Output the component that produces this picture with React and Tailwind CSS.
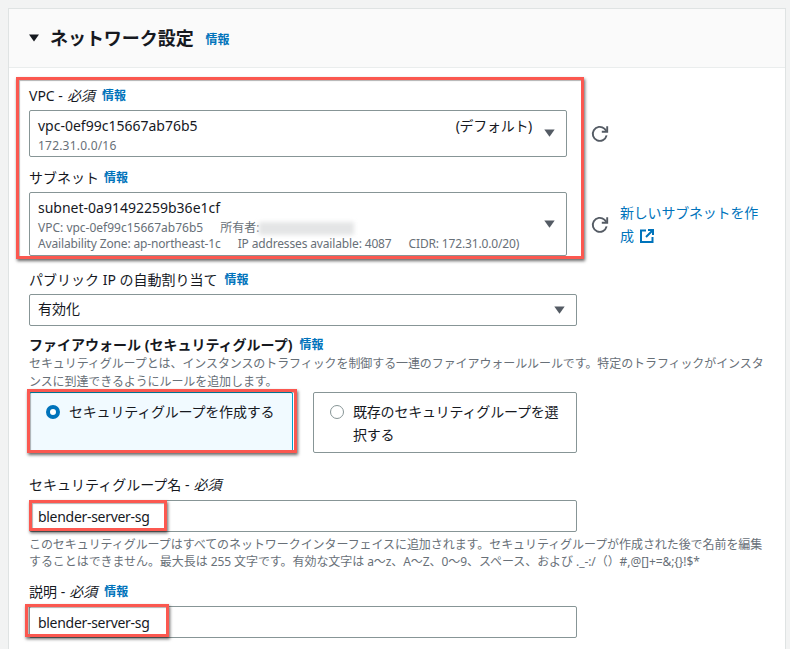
const FONT = "font-['Noto_Sans','Noto_Sans_CJK_JP',sans-serif]";
const HELP_1 = "このセキュリティグループはすべてのネットワークインターフェイスに追加されます。セキュリティグループが作成された後で名前を編集";
const HELP_2 = "することはできません。最大長は 255 文字です。有効な文字は a〜z、A〜Z、0〜9、スペース、および ._-:/（）#,@[]+=&;{}!$*";

function Info({ className = "" }) {
  return <a className={`text-[12px] font-bold text-[#0073bb] ${className}`}>情報</a>;
}

function Caret({ className = "" }) {
  return (
    <svg width="11" height="8" viewBox="0 0 11 8" className={`shrink-0 ${className}`}>
      <path d="M0.3 0.5 H10.7 L5.5 7.8 Z" fill="#545b64" />
    </svg>
  );
}

function Refresh({ className = "" }) {
  return (
    <svg width="18" height="18" viewBox="0 0 18 18" fill="none" className={`shrink-0 ${className}`}>
      <path d="M15.6 10.4 A7 7 0 1 1 13.4 3.6 L15.4 5.8" stroke="#545b64" strokeWidth="1.9" />
      <path d="M16.2 1.2 V6.8 H10.8" stroke="#545b64" strokeWidth="1.9" />
    </svg>
  );
}

function Highlight({ className }) {
  return (
    <div
      className={`absolute pointer-events-none border-[3px] border-[#fb5850] shadow-[1px_2px_3px_rgba(0,0,0,0.6),inset_1px_1px_1px_rgba(0,0,0,0.3)] ${className}`}
    />
  );
}

function TextField({ children }) {
  return (
    <div className="h-[32px] w-[548px] border border-[#879596] rounded-[2px] bg-white flex items-center pl-2 text-[14px] tracking-[-0.3px] text-[#16191f]">
      {children}
    </div>
  );
}

export default function App() {
  return (
    <div className={`w-[790px] h-[649px] overflow-hidden bg-[#f2f3f3] pt-2 pl-2 ${FONT}`}>
      <div className="w-[778px] h-[700px] bg-white border-l border-r border-t border-[#dfe3e3]">
        <div className="h-[59px] bg-[#fafafa] border-b border-[#eaeded] flex items-center pl-[20px]">
          <svg width="10" height="8" viewBox="0 0 10 8" className="mr-[11px]">
            <path d="M0 0.5 H10 L5 7.5 Z" fill="#16191f" />
          </svg>
          <h2 className="text-[18px] font-bold tracking-[-0.05px] text-[#16191f] leading-none">ネットワーク設定</h2>
          <Info className="ml-[12px] mt-[3px]" />
        </div>

        <div className="pl-[20px]">
          <section className="relative w-[538px] h-[188px] pt-[18px]">
            <Highlight className="left-[-13px] top-[9px] w-[568px] h-[182px]" />
            <div className="text-[14px] leading-[18px] text-[#16191f] flex items-center h-[18px] pt-[2px]">
              VPC -<em className="ml-1 italic">必須</em>
              <Info className="ml-[7px]" />
            </div>
            <div className="relative mt-[6px] w-[538px] h-[47px] border border-[#879596] rounded-[2px] flex pl-2 pt-[6px] pr-[11px]">
              <div className="flex-1">
                <div className="text-[14px] leading-[18px] text-[#16191f]">vpc-0ef99c15667ab76b5</div>
                <div className="text-[12px] tracking-[0.2px] leading-[18px] text-[#687078] mt-[2px]">172.31.0.0/16</div>
              </div>
              <span className="text-[14px] tracking-[-0.3px] leading-[18px] text-[#16191f] mr-[12px]">(デフォルト)</span>
              <Caret className="mt-[12px]" />
              <Refresh className="absolute right-[-43px] top-[14px]" />
            </div>
            <div className="text-[14px] leading-[18px] text-[#16191f] flex items-center h-[18px] mt-[11px] pt-[2px]">
              サブネット
              <Info className="ml-[5px]" />
            </div>
            <div className="relative mt-[6px] w-[538px] h-[64px] border border-[#879596] rounded-[2px] flex pl-2 pt-[6px] pr-[11px]">
              <div className="flex-1 relative">
                <div className="text-[14px] leading-[18px] text-[#16191f]">subnet-0a91492259b36e1cf</div>
                <div className="text-[12px] leading-[16px] text-[#687078] mt-[3px] flex items-center whitespace-nowrap">
                  <span>VPC: vpc-0ef99c15667ab76b5</span>
                  <span className="ml-[17px]">所有者:</span>
                  <span className="w-[95px] h-[13px] bg-[#e4e5e6] blur-[2px]" />
                </div>
                <div className="text-[12px] tracking-[-0.15px] leading-[16px] text-[#687078] flex whitespace-nowrap">
                  <span>Availability Zone: ap-northeast-1c</span>
                  <span className="ml-[17px]">IP addresses available: 4087</span>
                  <span className="ml-[17px]">CIDR: 172.31.0.0/20)</span>
                </div>
              </div>
              <Caret className="mt-[21px]" />
              <Refresh className="absolute right-[-43px] top-[23px]" />
              <div className="absolute left-[590px] top-[8px] w-[150px] text-[14px] tracking-[-0.2px] leading-[23px] text-[#0073bb]">
                新しいサブネットを作成
                <svg width="14" height="14" viewBox="0 0 14 14" fill="none" className="inline-block ml-[6px] mb-[2px]">
                  <path d="M6 1.5 H1 V13 H12.5 V8" stroke="#0073bb" strokeWidth="2" />
                  <path d="M8 1 H13 V6 M13 1 L6 8" stroke="#0073bb" strokeWidth="2" />
                </svg>
              </div>
            </div>
          </section>

          <div className="text-[14px] leading-[18px] text-[#16191f] flex items-center h-[18px] mt-[14px] pt-[2px]">
            パブリック IP の自動割り当て
            <Info className="ml-[7px]" />
          </div>
          <div className="mt-[6px] h-[32px] w-[548px] border border-[#879596] rounded-[2px] flex items-center justify-between pl-2 pr-[11px] text-[14px] leading-[18px] text-[#16191f]">
            <span className="mb-[3px]">有効化</span>
            <Caret />
          </div>

          <div className="text-[14px] leading-[18px] font-bold text-[#16191f] flex items-center h-[18px] mt-[9px] pt-[2px]">
            ファイアウォール (セキュリティグループ)
            <Info className="ml-[7px]" />
          </div>
          <p className="mt-[2px] w-[745px] text-[12px] tracking-[-0.09px] leading-[18px] text-[#687078]">
            セキュリティグループとは、インスタンスのトラフィックを制御する一連のファイアウォールルールです。特定のトラフィックがインスタ
            <br />
            ンスに到達できるようにルールを追加します。
          </p>

          <div className="relative mt-[1px] flex gap-[20px] w-[548px]">
            <Highlight className="left-[-2px] top-[-3px] w-[270px] h-[64px]" />
            <div className="w-[264px] h-[60px] bg-[#f1faff] border border-[#00a1c9] rounded-[2px] flex gap-[9px] pl-[16px] pt-[7px] text-[14px] tracking-[-0.2px] leading-[23px] text-[#16191f]">
              <span className="mt-[5px] w-[14px] h-[14px] shrink-0 rounded-full border-[4px] border-[#0073bb] bg-white" />
              セキュリティグループを作成する
            </div>
            <div className="w-[264px] h-[61px] bg-white border border-[#879596] rounded-[2px] flex gap-[9px] pl-[16px] pr-[4px] pt-[7px] text-[14px] tracking-[-0.2px] leading-[23px] text-[#16191f]">
              <span className="mt-[5px] w-[14px] h-[14px] shrink-0 rounded-full border border-[#879596] bg-white" />
              <span>
                既存のセキュリティグループを選
                <br />
                択する
              </span>
            </div>
          </div>

          <div className="text-[14px] leading-[18px] text-[#16191f] flex items-center h-[18px] mt-[22px] pt-[2px]">
            セキュリティグループ名 -<em className="ml-1 italic">必須</em>
          </div>
          <div className="relative mt-[7px]">
            <Highlight className="left-0 top-0 w-[138px] h-[31px]" />
            <TextField>blender-server-sg</TextField>
          </div>
          <p className="mt-[4px] w-[745px] text-[12px] tracking-[-0.07px] leading-[17px] text-[#687078]">
            {HELP_1}
            <br />
            {HELP_2}
          </p>
          <div className="text-[14px] leading-[18px] text-[#16191f] flex items-center h-[18px] mt-[12px] pt-[2px]">
            説明 -<em className="ml-1 italic">必須</em>
            <Info className="ml-[7px]" />
          </div>
          <div className="relative mt-[6px]">
            <Highlight className="left-[-4px] top-[-2px] w-[144px] h-[33px]" />
            <TextField>blender-server-sg</TextField>
          </div>
        </div>
      </div>
    </div>
  );
}
